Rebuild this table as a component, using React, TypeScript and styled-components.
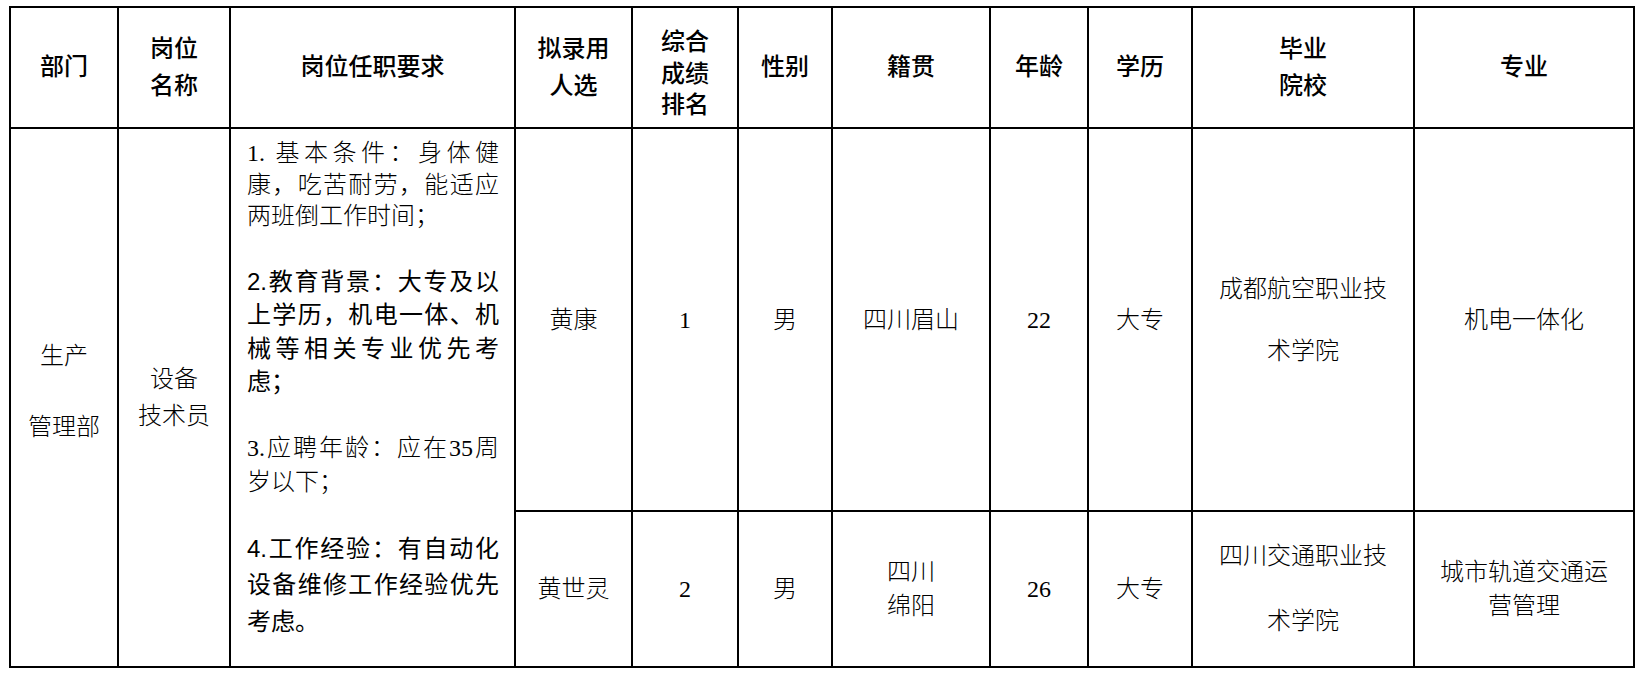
import React from "react";
import styled, { createGlobalStyle } from "styled-components";

const columns = [108, 112, 285, 117, 106, 94, 158, 98, 104, 222, 220];

interface Paragraph {
  serif: boolean;
  lh: number;
  lines: string[];
}

const requirements: Paragraph[] = [
  {
    serif: true,
    lh: 31.5,
    lines: ["1. 基本条件：身体健", "康，吃苦耐劳，能适应", "两班倒工作时间；"],
  },
  {
    serif: false,
    lh: 33.5,
    lines: [
      "2.教育背景：大专及以",
      "上学历，机电一体、机",
      "械等相关专业优先考",
      "虑；",
    ],
  },
  {
    serif: true,
    lh: 34,
    lines: ["3.应聘年龄：应在35周", "岁以下；"],
  },
  {
    serif: false,
    lh: 36.5,
    lines: ["4.工作经验：有自动化", "设备维修工作经验优先", "考虑。"],
  },
];

interface Candidate {
  name: string;
  rank: string;
  gender: string;
  origin: string[];
  age: string;
  degree: string;
  school: string[];
  major: string[];
}

const candidates: Candidate[] = [
  {
    name: "黄康",
    rank: "1",
    gender: "男",
    origin: ["四川眉山"],
    age: "22",
    degree: "大专",
    school: ["成都航空职业技", "术学院"],
    major: ["机电一体化"],
  },
  {
    name: "黄世灵",
    rank: "2",
    gender: "男",
    origin: ["四川", "绵阳"],
    age: "26",
    degree: "大专",
    school: ["四川交通职业技", "术学院"],
    major: ["城市轨道交通运", "营管理"],
  },
];

const Lines: React.FC<{ items: string[] }> = ({ items }) => (
  <>
    {items.map((t, i) => (
      <React.Fragment key={i}>
        {i > 0 && <br />}
        {t}
      </React.Fragment>
    ))}
  </>
);

export default function App() {
  return (
    <>
      <GlobalStyle />
      <Page>
        <Table>
          <colgroup>
            {columns.map((w, i) => (
              <Col key={i} $w={w} />
            ))}
          </colgroup>
          <thead>
            <Row $h={121}>
              <HeadCell $lh={37}>部门</HeadCell>
              <HeadCell $lh={37}>
                岗位
                <br />
                名称
              </HeadCell>
              <HeadCell $lh={37}>岗位任职要求</HeadCell>
              <HeadCell $lh={37}>
                拟录用
                <br />
                人选
              </HeadCell>
              <HeadCell $lh={31.5} $pt={14}>
                综合
                <br />
                成绩
                <br />
                排名
              </HeadCell>
              <HeadCell $lh={37}>性别</HeadCell>
              <HeadCell $lh={37}>籍贯</HeadCell>
              <HeadCell $lh={37}>年龄</HeadCell>
              <HeadCell $lh={37}>学历</HeadCell>
              <HeadCell $lh={37}>
                毕业
                <br />
                院校
              </HeadCell>
              <HeadCell $lh={37}>专业</HeadCell>
            </Row>
          </thead>
          <tbody>
            {candidates.map((c, idx) => (
              <Row key={c.name} $h={idx === 0 ? 383 : 156}>
                {idx === 0 && (
                  <>
                    <Cell rowSpan={2} $lh={71} $shift={-12}>
                      生产
                      <br />
                      管理部
                    </Cell>
                    <Cell rowSpan={2} $lh={37}>
                      设备
                      <br />
                      技术员
                    </Cell>
                    <ReqCell rowSpan={2}>
                      {requirements.map((p, pi) => (
                        <ReqParagraph key={pi} $serif={p.serif} $lh={p.lh}>
                          {p.lines.map((l, li) => (
                            <ReqLine
                              key={li}
                              $fill={li < p.lines.length - 1}
                            >
                              {l}
                            </ReqLine>
                          ))}
                        </ReqParagraph>
                      ))}
                    </ReqCell>
                  </>
                )}
                <Cell>{c.name}</Cell>
                <Cell>{c.rank}</Cell>
                <Cell>{c.gender}</Cell>
                <Cell $lh={34}>
                  <Lines items={c.origin} />
                </Cell>
                <Cell>{c.age}</Cell>
                <Cell>{c.degree}</Cell>
                <Cell $lh={idx === 0 ? 62 : 65}>
                  <Lines items={c.school} />
                </Cell>
                <Cell $lh={34}>
                  <Lines items={c.major} />
                </Cell>
              </Row>
            ))}
          </tbody>
        </Table>
      </Page>
    </>
  );
}

// Styles
const GlobalStyle = createGlobalStyle`
  body {
    margin: 0;
    background: #ffffff;
  }
`;

const Page = styled.div`
  padding: 6px 0 0 9px;
`;

const Table = styled.table`
  border-collapse: collapse;
  table-layout: fixed;
  width: 1626px;
  font-family: "Liberation Serif", "Noto Sans CJK SC", serif;
  color: #000;
`;

const Col = styled.col<{ $w: number }>`
  width: ${({ $w }) => $w}px;
`;

const Row = styled.tr<{ $h: number }>`
  height: ${({ $h }) => $h}px;
`;

const HeadCell = styled.th<{ $lh: number; $pt?: number }>`
  border: 2px solid #000;
  padding: ${({ $pt }) => $pt ?? 0}px 0 0;
  font-size: 24px;
  font-weight: 500;
  line-height: ${({ $lh }) => $lh}px;
  text-align: center;
  vertical-align: middle;
`;

const Cell = styled.td<{ $lh?: number; $shift?: number }>`
  border: 2px solid #000;
  padding: 0 0 ${({ $shift }) => ($shift ? -$shift : 0)}px;
  font-size: 24px;
  font-weight: 300;
  line-height: ${({ $lh }) => $lh ?? 34}px;
  text-align: center;
  vertical-align: middle;
`;

const ReqCell = styled.td`
  border: 2px solid #000;
  padding: 9px 15px 0 16px;
  vertical-align: top;
  font-size: 24px;
`;

const ReqParagraph = styled.div<{ $serif: boolean; $lh: number }>`
  font-family: ${({ $serif }) =>
    $serif
      ? `"Liberation Serif", "Noto Sans CJK SC", serif`
      : `"Liberation Sans", "Noto Sans CJK SC", sans-serif`};
  font-weight: ${({ $serif }) => ($serif ? 300 : 400)};
  line-height: ${({ $lh }) => $lh}px;
  & + & {
    margin-top: 32px;
  }
`;

const ReqLine = styled.span<{ $fill: boolean }>`
  display: block;
  text-align: ${({ $fill }) => ($fill ? "justify" : "left")};
  text-align-last: ${({ $fill }) => ($fill ? "justify" : "auto")};
`;
